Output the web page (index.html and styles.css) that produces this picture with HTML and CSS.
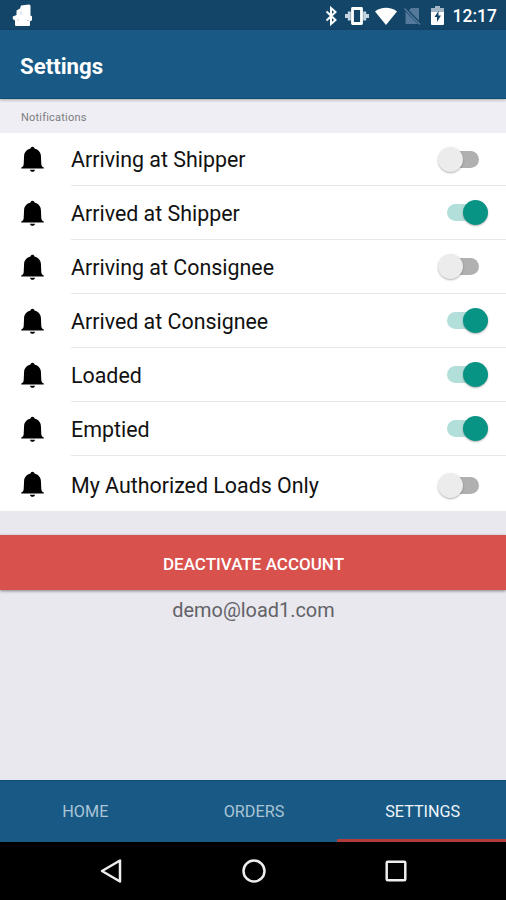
FILE: index.html
```
<!DOCTYPE html>
<html lang="en">
<head>
<meta charset="utf-8">
<title>Settings</title>
<link rel="stylesheet" href="styles.css">
</head>
<body>
<svg class="defs" aria-hidden="true">
  <symbol id="bell" viewBox="0 0 23 27">
    <path d="M11.500.7c1.100 0 1.800.7 2 1.800 3.700 1 6.200 3.800 6.400 7.300l.4 8.200c.1 1.800.9 2.900 2.500 3.600v.9H.2v-.9c1.600-.7 2.400-1.800 2.500-3.600l.4-8.200c.2-3.500 2.700-6.300 6.400-7.300.2-1.100.9-1.800 2-1.800z"/>
    <path d="M9 23.700h5c-.3 1.400-1.200 2.100-2.500 2.100S9.300 25.100 9 23.700z"/>
  </symbol>
</svg>
<div class="screen">
  <div class="status">
    <svg class="app-icon" width="22" height="24" viewBox="0 0 22 24"><path d="M9 1.500L17 .5q1.500 0 1.500 1.500v9.500l1.500.7v4l-2 1V21q0 1-1 1H4q-1 0-1-1v-4.500L.8 15v-2.500L4.500 11V6.500L8 4.500z" fill="#fff"/><path d="M9 7.500v3.500M5 16h2M15 16.500h2" stroke="#c3d2df" fill="none"/></svg>
    <div class="status-icons">
      <svg width="13" height="20" viewBox="0 0 13 20"><path d="M1.500 5.500l9 8.500-4.500 4V2l4.500 4-9 8.500" fill="none" stroke="#fff" stroke-width="2"/></svg>
      <svg width="24" height="20" viewBox="0 0 24 20"><path d="M7.500 2.500h9v15h-9z" fill="none" stroke="#fff" stroke-width="2.800" stroke-linejoin="round"/><path d="M4.300 5.500v9M19.700 5.500v9M1.500 8v4M22.500 8v4" stroke="#c5d5e0" stroke-width="3"/></svg>
      <svg width="22" height="18" viewBox="0 0 22 18"><path d="M0 4.500C6-.5 16-.5 22 4.500L11 18z" fill="#fff"/></svg>
      <svg width="17" height="18" viewBox="0 0 17 18"><path d="M7 1h8v12.700L5 3.200zM1.500 4.500L14 17H1.500z" fill="#54799a"/><path d="M.5 1.500l15.500 16" stroke="#54799a" stroke-width="1.400"/></svg>
      <svg width="13" height="19" viewBox="0 0 13 19"><path d="M4 0h5v2h3q1 0 1 1v15q0 1-1 1H1q-1 0-1-1V3q0-1 1-1h3z" fill="#fff"/><path d="M4 0h5v2h4v4H0V2h4z" fill="#a2b6c6"/><path d="M7.500 5L3.500 11h2.500v5l4-6.500H7.500z" fill="#134569"/></svg>
    </div>
    <span class="clock">12:17</span>
  </div>
  <header class="appbar"><h1>Settings</h1></header>
  <h2 class="section"><span>Notifications</span></h2>
  <ul class="list">
    <li><svg class="bell"><use href="#bell"/></svg><div class="row"><span>Arriving at Shipper</span><i class="switch"></i></div></li>
    <li><svg class="bell"><use href="#bell"/></svg><div class="row"><span>Arrived at Shipper</span><i class="switch on"></i></div></li>
    <li><svg class="bell"><use href="#bell"/></svg><div class="row"><span>Arriving at Consignee</span><i class="switch"></i></div></li>
    <li><svg class="bell"><use href="#bell"/></svg><div class="row"><span>Arrived at Consignee</span><i class="switch on"></i></div></li>
    <li><svg class="bell"><use href="#bell"/></svg><div class="row"><span>Loaded</span><i class="switch on"></i></div></li>
    <li><svg class="bell"><use href="#bell"/></svg><div class="row"><span>Emptied</span><i class="switch on"></i></div></li>
    <li><svg class="bell"><use href="#bell"/></svg><div class="row"><span>My Authorized Loads Only</span><i class="switch"></i></div></li>
  </ul>
  <button class="deactivate"><span>DEACTIVATE ACCOUNT</span></button>
  <p class="email"><span>demo@load1.com</span></p>
  <nav class="tabs"><a><span>HOME</span></a><a><span>ORDERS</span></a><a class="active"><span>SETTINGS</span></a></nav>
  <div class="navbar">
    <svg width="24" height="26" viewBox="0 0 24 26"><path d="M21 2.500v21L3 13z" fill="none" stroke="#eee" stroke-width="2.500" stroke-linejoin="round"/></svg>
    <svg width="26" height="26" viewBox="0 0 26 26"><circle cx="13" cy="13" r="10.500" fill="none" stroke="#eee" stroke-width="2.500"/></svg>
    <svg width="24" height="26" viewBox="0 0 24 26"><rect x="2.700" y="3.700" width="18.600" height="18.600" rx="1" fill="none" stroke="#eee" stroke-width="2.500"/></svg>
  </div>
</div>
</body>
</html>
```
FILE: styles.css
```
* { box-sizing: border-box; }
body { margin: 0; font-family: Roboto, "Liberation Sans", sans-serif; }
.defs { display: none; }
.screen { width: 506px; height: 900px; display: flex; flex-direction: column; background: #e9e8ee; overflow: hidden; }

.status { height: 30px; flex: none; background: #134569; display: flex; align-items: center; padding: 0 9px 0 12px; color: #fff; }
.app-icon { margin-top: 2px; }
.status-icons { margin-left: auto; display: flex; align-items: center; gap: 7px; margin-right: 9px; margin-top: 1px; }
.status-icons svg:nth-child(2) { margin-right: -1px; }
.status-icons svg:nth-child(4) { margin-right: 3px; }
.clock { font-size: 17.500px; font-weight: 500; line-height: 30px; margin-top: 2px; }

.appbar { height: 69px; flex: none; background: #185a85; display: flex; align-items: center; padding: 3px 20px 0; border-bottom: 1px solid #114a72; box-shadow: 0 1px 3px rgba(0,0,0,.3); z-index: 1; }
.appbar h1 { margin: 0; color: #fff; font-size: 22.200px; font-weight: 700; line-height: 26px; }

.section { height: 34px; flex: none; margin: 0; padding: 2px 21px 0; display: flex; align-items: center; background: #efeef4; color: #7c7c80; font-size: 11px; font-weight: 400; letter-spacing: .2px; }

.list { list-style: none; margin: 0; padding: 0; background: #fff; flex: none; }
.list li { height: 54px; display: flex; align-items: center; padding-left: 21px; }
.list li:first-child { height: 53px; }
.list li:last-child { height: 55px; }
.bell { width: 23px; height: 27px; margin-right: 27px; flex: none; }
.row { flex: 1; align-self: stretch; display: flex; align-items: center; justify-content: space-between; padding-right: 18px; border-bottom: 1px solid #e8e8ea; color: #111; font-size: 21.400px; }
.row span { white-space: nowrap; padding-top: 1px; }
.list li:last-child .row { border-bottom: 0; padding-top: 3px; }
.list li:last-child .bell { margin-top: 2px; }

.switch { display: block; position: relative; width: 50px; height: 25px; }
.switch::before { content: ""; position: absolute; left: 10px; top: 4px; width: 31px; height: 17px; border-radius: 9px; background: #b0b0b0; }
.switch::after { content: ""; position: absolute; left: 0; top: 0; width: 25px; height: 25px; border-radius: 50%; background: #ececec; box-shadow: 0 1px 2px rgba(0,0,0,.3); }
.switch.on::before { left: 9px; background: #b2dfda; }
.switch.on::after { left: 25px; background: #079485; }

.deactivate { margin: 24px 0 0; border: 0; height: 55px; flex: none; background: #d8514d; color: #fff; font-family: inherit; font-size: 17px; font-weight: 500; padding: 2px 0 0 1px; box-shadow: 0 1px 3px rgba(0,0,0,.45); }
.email { margin: 8px 0 0; padding-left: 1px; text-align: center; font-size: 19.900px; line-height: 26px; color: #626267; }

.tabs { margin-top: auto; height: 62px; flex: none; display: grid; grid-template-columns: repeat(3, 1fr); background: #185a85; border-top: 1px solid #114a72; }
.tabs a { display: flex; align-items: center; justify-content: center; color: #aac4d6; font-size: 16.200px; padding: 3px 0 0 2px; border-bottom: 3px solid transparent; }
.tabs a.active { color: #f0f4fa; border-bottom-color: #b23c3b; }
.navbar { height: 58px; flex: none; background: #000; display: flex; align-items: center; justify-content: space-between; padding: 0 98px 0 99px; }
```
